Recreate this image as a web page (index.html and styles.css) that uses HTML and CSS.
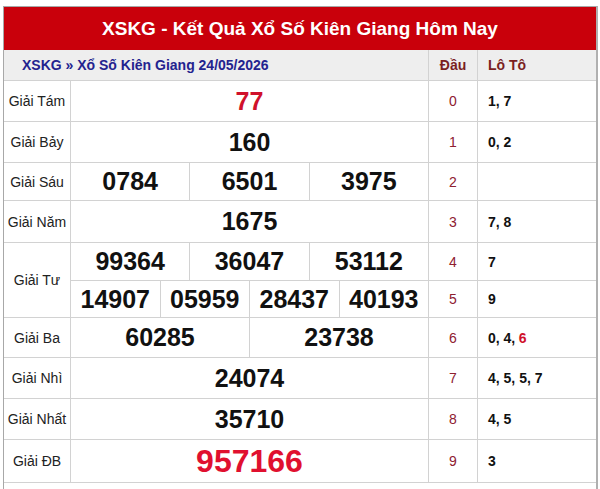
FILE: index.html
```html
<!DOCTYPE html>
<html lang="vi">
<head>
<meta charset="utf-8">
<title>XSKG - Kết Quả Xổ Số Kiên Giang Hôm Nay</title>
<link rel="stylesheet" href="styles.css">
</head>
<body>
<div class="box">
  <div class="title">XSKG - Kết Quả Xổ Số Kiên Giang Hôm Nay</div>
  <div class="grid">
    <div class="sub sub-name">XSKG » Xổ Số Kiên Giang 24/05/2026</div>
    <div class="sub sub-dau">Đầu</div>
    <div class="sub sub-loto">Lô Tô</div>

    <div class="lbl">Giải Tám</div>
    <div class="nums"><span class="n red">77</span></div>
    <div class="dau">0</div>
    <div class="loto">1, 7</div>

    <div class="lbl">Giải Bảy</div>
    <div class="nums"><span class="n">160</span></div>
    <div class="dau">1</div>
    <div class="loto">0, 2</div>

    <div class="lbl">Giải Sáu</div>
    <div class="nums c3"><span class="n">0784</span><span class="n">6501</span><span class="n">3975</span></div>
    <div class="dau">2</div>
    <div class="loto"></div>

    <div class="lbl">Giải Năm</div>
    <div class="nums"><span class="n">1675</span></div>
    <div class="dau">3</div>
    <div class="loto">7, 8</div>

    <div class="lbl tu">Giải Tư</div>
    <div class="nums c3"><span class="n">99364</span><span class="n">36047</span><span class="n">53112</span></div>
    <div class="dau">4</div>
    <div class="loto">7</div>
    <div class="nums c4"><span class="n">14907</span><span class="n">05959</span><span class="n">28437</span><span class="n">40193</span></div>
    <div class="dau">5</div>
    <div class="loto">9</div>

    <div class="lbl">Giải Ba</div>
    <div class="nums c2"><span class="n">60285</span><span class="n">23738</span></div>
    <div class="dau">6</div>
    <div class="loto">0, 4, <span class="hl">6</span></div>

    <div class="lbl">Giải Nhì</div>
    <div class="nums"><span class="n">24074</span></div>
    <div class="dau">7</div>
    <div class="loto">4, 5, 5, 7</div>

    <div class="lbl">Giải Nhất</div>
    <div class="nums"><span class="n">35710</span></div>
    <div class="dau">8</div>
    <div class="loto">4, 5</div>

    <div class="lbl">Giải ĐB</div>
    <div class="nums"><span class="n db">957166</span></div>
    <div class="dau">9</div>
    <div class="loto">3</div>
  </div>
</div>
</body>
</html>
```

FILE: styles.css
```css
html, body {
  margin: 0;
  padding: 0;
  background: #ffffff;
}
body {
  font-family: "Liberation Sans", Arial, sans-serif;
}
.box {
  margin: 6px 0 0 3px;
  width: 592px;
  border: 1px solid #a8a8a8;
  border-right: 2px solid #b0b0b0;
  border-bottom: none;
  padding-bottom: 10px;
}
.title {
  height: 43px;
  background: #c9000b;
  color: #ffffff;
  font-weight: bold;
  font-size: 19px;
  display: flex;
  align-items: center;
  justify-content: center;
}
.grid {
  display: grid;
  grid-template-columns: 66px 357px 48px 118px;
  grid-template-rows: 30px 40px 40px 37px 41px 37px 36px 39px 40px 40px 42px;
  gap: 1px;
  background: #d2d2d2;
  border-bottom: 1px solid #d2d2d2;
}
.grid > div {
  background: #ffffff;
}
.sub {
  background: #eeeeee !important;
  font-weight: bold;
  font-size: 14px;
  display: flex;
  align-items: center;
}
.sub-name {
  grid-column: 1 / span 2;
  color: #23238f;
  padding-left: 18px;
}
.sub-dau {
  color: #7a1f1f;
  justify-content: center;
}
.sub-loto {
  color: #7a1f1f;
  padding-left: 10px;
}
.lbl {
  display: flex;
  align-items: center;
  justify-content: center;
  font-size: 14px;
  color: #222222;
}
.lbl.tu {
  grid-row: span 2;
}
.nums {
  display: grid;
  grid-template-columns: 1fr;
  gap: 1px;
  background: #d2d2d2 !important;
}
.nums.c2 { grid-template-columns: repeat(2, 1fr); }
.nums.c3 { grid-template-columns: repeat(3, 1fr); }
.nums.c4 { grid-template-columns: repeat(4, 1fr); }
.n {
  background: #ffffff;
  display: flex;
  align-items: center;
  justify-content: center;
  font-weight: bold;
  font-size: 25px;
  color: #111111;
}
.n.red {
  color: #d0112b;
}
.n.db {
  color: #e0102f;
  font-size: 32px;
}
.dau {
  display: flex;
  align-items: center;
  justify-content: center;
  font-size: 14px;
  color: #8e2030;
}
.loto {
  display: flex;
  align-items: center;
  padding-left: 10px;
  font-size: 14px;
  font-weight: bold;
  color: #111111;
}
.hl {
  color: #d0112b;
  margin-left: 0.25em;
}
```
